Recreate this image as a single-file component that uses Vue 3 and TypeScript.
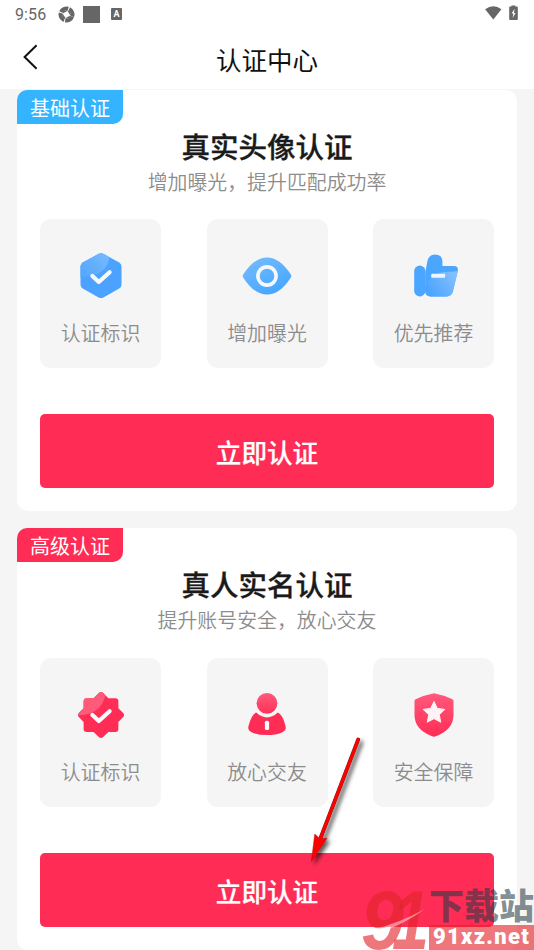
<script setup lang="ts">
interface Feature {
  icon: 'hexagon' | 'eye' | 'thumb' | 'badge' | 'person' | 'shield'
  label: string
}

interface Plan {
  tag: string
  tone: 'basic' | 'advanced'
  title: string
  desc: string
  features: Feature[]
}

const plans: Plan[] = [
  {
    tag: '基础认证',
    tone: 'basic',
    title: '真实头像认证',
    desc: '增加曝光，提升匹配成功率',
    features: [
      { icon: 'hexagon', label: '认证标识' },
      { icon: 'eye', label: '增加曝光' },
      { icon: 'thumb', label: '优先推荐' },
    ],
  },
  {
    tag: '高级认证',
    tone: 'advanced',
    title: '真人实名认证',
    desc: '提升账号安全，放心交友',
    features: [
      { icon: 'badge', label: '认证标识' },
      { icon: 'person', label: '放心交友' },
      { icon: 'shield', label: '安全保障' },
    ],
  },
]
</script>

<template>
  <div class="screen">
    <header class="top">
      <div class="status">
        <span class="clock">9:56</span>
        <svg class="s-swirl" viewBox="0 0 16 16">
          <circle cx="8" cy="8" r="5.700" fill="none" stroke="#666" stroke-width="3.600" stroke-dasharray="7.900 1.050" transform="rotate(20 8 8)" />
          <path d="M4 5.500 9.500 3.200 6 7.500ZM10.500 4l2.300 5.500L8.500 6ZM12 10.500l-5.500 2.300L10 8.500ZM5.500 12 3.200 6.500 7.500 10Z" fill="#666" />
          <circle cx="8" cy="8" r="2.600" fill="#fff" />
        </svg>
        <span class="s-square"></span>
        <span class="s-letter">A</span>
        <span class="spacer"></span>
        <svg class="s-wifi" viewBox="0 0 18 15"><path d="M0 3.600Q9-3 17.500 3.600L8.800 14.500Z" fill="#666" /></svg>
        <svg class="s-battery" viewBox="0 0 9 16">
          <path d="M2.400 1.500V.5h4v1H8q.8 0 .8.8v12q0 .8-.8.8H1q-.8 0-.8-.8v-12q0-.8.8-.8Z" fill="#666" />
          <path d="M5.600 3.800 2.600 8.600h1.800L3.600 13l3-5H5Z" fill="#fff" />
        </svg>
      </div>
      <nav class="nav">
        <svg class="back" viewBox="0 0 16 26"><path d="M14.600 1.200 2.600 13l12 11.800" fill="none" stroke="#111" stroke-width="2" /></svg>
        <h1>认证中心</h1>
      </nav>
    </header>

    <main class="list">
      <section v-for="plan in plans" :key="plan.tag" class="card">
        <span class="tag" :class="plan.tone">{{ plan.tag }}</span>
        <h2>{{ plan.title }}</h2>
        <p class="desc">{{ plan.desc }}</p>
        <div class="features">
          <div v-for="f in plan.features" :key="f.label" class="feature">
            <svg class="icon" viewBox="0 0 50 50">
              <template v-if="f.icon === 'hexagon'">
                <defs>
                  <linearGradient id="hexShine" x1="0" y1="1" x2="1" y2=".2"><stop offset="0" stop-color="#4fa4ff" /><stop offset="1" stop-color="#74b9ff" /></linearGradient>
                  <clipPath id="hexClip"><path d="M22.600 2.800q2.400-1.300 4.800 0l15.800 8.800q2.300 1.400 2.300 4v18q0 2.600-2.300 4l-15.800 8.800q-2.400 1.300-4.800 0L6.800 37.600q-2.300-1.400-2.300-4v-18q0-2.600 2.300-4Z" /></clipPath>
                </defs>
                <g clip-path="url(#hexClip)">
                  <rect width="50" height="50" fill="#4ba2ff" />
                  <path d="M0 0h32Q36 12 25 21 16 27 0 26Z" fill="url(#hexShine)" />
                </g>
                <path d="m16.400 25 6.400 6 10.800-9.800" class="tick" />
              </template>
              <template v-else-if="f.icon === 'eye'">
                <defs><linearGradient id="eyeFill" x1="0" y1="0" x2=".6" y2="1"><stop offset="0" stop-color="#79bdff" /><stop offset="1" stop-color="#46a7ff" /></linearGradient></defs>
                <path d="M1.200 23.600Q12 6.500 25 6.500t23.800 17.100q1 1.400 0 2.800Q38 43.500 25 43.500T1.200 26.400q-1-1.400 0-2.800Z" fill="url(#eyeFill)" />
                <circle cx="25" cy="25" r="9.100" fill="none" stroke="#f5f7fa" stroke-width="3.600" />
              </template>
              <template v-else-if="f.icon === 'thumb'">
                <defs><linearGradient id="thumbFill" x1=".1" y1=".8" x2="1" y2=".3"><stop offset="0" stop-color="#4ba4ff" /><stop offset="1" stop-color="#83c0ff" /></linearGradient></defs>
                <rect x="5.200" y="14.500" width="11.200" height="31" rx="5.600" fill="#4aa6ff" />
                <path d="M16.200 21.500 18.700 9Q20.300 3.400 26 3.400q7.400 0 7.400 7.400v4.200h11.400q4.800 0 4 5l-5 20.600q-1.200 4.800-6 4.800H21.700q-5.500 0-5.500-5.400Z" fill="#4aa6ff" />
                <path d="M48.800 20 44 40.600q-1.400 4.800-6.200 4.800H21.700q-5.500 0-5.500-5.400V35Q22 23 34 21q7-.2 14.800-1Z" fill="url(#thumbFill)" />
                <rect x="22.200" y="22.800" width="14" height="4" rx="1" fill="#edf6ff" />
              </template>
              <template v-else-if="f.icon === 'badge'">
                <defs>
                  <clipPath id="badgeClip"><path d="M22.800 3q2.200-1.800 4.400 0l5.200 5.200h7q3 0 3 3v7l4.800 4.700q1.800 2.100 0 4.200l-4.800 4.800v7.200q0 3-3 3h-7L27.200 47q-2.200 1.800-4.400 0l-5.200-4.900h-7q-3 0-3-3v-7.200l-4.800-4.800q-1.800-2.100 0-4.200l4.800-4.700v-7q0-3 3-3h7Z" /></clipPath>
                </defs>
                <g clip-path="url(#badgeClip)">
                  <rect width="50" height="50" fill="#ff2d55" />
                  <path d="M0 0h30Q29 15 19 21 11 26 0 25Z" fill="#ff5a7a" />
                </g>
                <path d="m16.400 25 6.400 6 10.800-9.800" class="tick" />
              </template>
              <template v-else-if="f.icon === 'person'">
                <defs><linearGradient id="headFill" x1="0" y1="0" x2="0" y2="1"><stop offset="0" stop-color="#ff5a7c" /><stop offset="1" stop-color="#ff3158" /></linearGradient></defs>
                <circle cx="25" cy="13.300" r="10.400" fill="url(#headFill)" />
                <path d="M14.300 22.600Q19 27.400 25 27.400t10.700-4.800Q40.500 24.300 43.500 36q1.200 4.700-3.600 6.400Q34 45 25 45T10.100 42.400Q5.300 40.700 6.500 36 9.500 24.300 14.300 22.600Z" fill="#ff2d55" />
                <rect x="22.900" y="30.700" width="4.200" height="9.400" rx="1.600" fill="#fff" />
              </template>
              <template v-else>
                <defs><linearGradient id="shieldFill" x1="0" y1="0" x2="0" y2="1"><stop offset="0" stop-color="#ff5a7c" /><stop offset="1" stop-color="#ff2d55" /></linearGradient></defs>
                <path d="M24 3.500q1-.3 2 0 9 1.700 17.400 5.700 1.100.5 1.100 1.700V25q0 14.400-17.500 21.300-2 .8-4 0Q5.500 39.400 5.500 25V10.900q0-1.200 1.100-1.700Q15 5.200 24 3.500Z" fill="url(#shieldFill)" />
                <path d="m25 11.500 3.300 6.900 7.500 1-5.500 5.300 1.400 7.500-6.700-3.600-6.700 3.600 1.400-7.500-5.500-5.300 7.500-1Z" fill="#fdf3f5" stroke="#fdf3f5" stroke-width="1" stroke-linejoin="round" />
              </template>
            </svg>
            <span class="label">{{ f.label }}</span>
          </div>
        </div>
        <button class="action" type="button">立即认证</button>
      </section>
    </main>

    <svg class="arrow" viewBox="0 0 70 140">
      <defs><filter id="arrowShadow" x="-30%" y="-10%" width="180%" height="130%"><feDropShadow dx="3" dy="3" stdDeviation="2" flood-color="#000" flood-opacity=".65" /></filter></defs>
      <g filter="url(#arrowShadow)">
        <path d="M58.200 9.500 19.800 110" stroke="#7d1515" stroke-width="3.800" stroke-linecap="round" />
        <path d="m11.400 131.500 3.400-27.500 4.600 4.600 7.600-.4Z" fill="#f00" stroke="#b01010" stroke-width=".5" />
        <path d="M58.200 9.500 19.400 111" stroke="#f00" stroke-width="3" stroke-linecap="round" />
      </g>
    </svg>

    <div class="watermark">
      <svg class="wm-logo" viewBox="0 0 70 64">
        <text x="2" y="63" textLength="43" lengthAdjust="spacingAndGlyphs">9</text>
        <text x="33" y="63" textLength="37" lengthAdjust="spacingAndGlyphs">1</text>
        <path d="M16 43Q40 37 66 23 42 40 22 46Z" fill="#fff" fill-opacity=".45" />
      </svg>
      <div class="wm-side">
        <span class="wm-name">下载站</span>
        <span class="wm-url">91xz.net</span>
      </div>
    </div>
  </div>
</template>

<style>
body {
  margin: 0;
  background: #f5f5f5;
}
</style>

<style scoped>
.screen {
  position: relative;
  box-sizing: border-box;
  width: 534px;
  height: 950px;
  overflow: hidden;
  background: #f5f5f5;
  font-family: Roboto, "Noto Sans CJK SC", sans-serif;
}
.top {
  height: 89px;
  background: #fff;
}
.status {
  display: flex;
  align-items: center;
  height: 28px;
  padding: 0 15px;
  color: #666;
}
.clock {
  width: 43px;
  font-size: 16px;
  letter-spacing: 0.1px;
}
.s-swirl {
  width: 17px;
  height: 17px;
}
.s-square {
  width: 17px;
  height: 17px;
  margin-left: 8px;
  background: #666;
}
.s-letter {
  width: 11px;
  height: 12px;
  margin-left: 11px;
  border-radius: 1px;
  background: #666;
  color: #fff;
  font-size: 9px;
  font-weight: 700;
  line-height: 12px;
  text-align: center;
}
.spacer {
  flex: 1;
}
.s-wifi {
  width: 17px;
  height: 14px;
  margin: 0 7px 2px 0;
}
.s-battery {
  width: 9px;
  height: 16px;
  margin: 0 1px 2px 0;
}
.nav {
  display: grid;
  grid-template-columns: 60px 1fr 60px;
  align-items: center;
  height: 59px;
}
.back {
  width: 16px;
  height: 26px;
  margin: 0 0 5px 22px;
}
h1 {
  margin: 0;
  padding-top: 3px;
  color: #111;
  font-size: 25.500px;
  font-weight: 400;
  line-height: 60px;
  text-align: center;
}
.list {
  display: flex;
  flex-direction: column;
  gap: 17px;
  padding: 0.500px 17px 0;
}
.card {
  display: flex;
  flex-direction: column;
  box-sizing: border-box;
  height: 421.700px;
  padding: 0 23px;
  border-radius: 11px;
  background: #fff;
}
.tag {
  width: 106px;
  height: 34px;
  margin-left: -23px;
  border-radius: 10px 0 10px 0;
  color: #fff;
  font-size: 20px;
  line-height: 38px;
  text-align: center;
}
.basic {
  background: #34b4ff;
}
.advanced {
  background: #ff2d55;
}
h2 {
  margin: 0;
  padding-top: 3px;
  color: #1a1a1a;
  font-size: 28.500px;
  font-weight: 500;
  line-height: 44px;
  text-align: center;
  -webkit-text-stroke: 0.300px #1a1a1a;
}
.desc {
  margin: 0;
  color: #8c8c8c;
  font-size: 19.900px;
  font-weight: 350;
  line-height: 26px;
  text-align: center;
}
.features {
  display: flex;
  justify-content: space-between;
  margin-top: 22.800px;
}
.feature {
  display: flex;
  flex-direction: column;
  align-items: center;
  box-sizing: border-box;
  width: 121px;
  height: 149px;
  padding-top: 32px;
  border-radius: 11px;
  background: #f5f5f5;
}
.icon {
  width: 50px;
  height: 50px;
}
.tick {
  fill: none;
  stroke: #f8f9fb;
  stroke-width: 4.200;
  stroke-linecap: round;
  stroke-linejoin: round;
}
.label {
  margin-top: 19px;
  color: #8c8c8c;
  font-size: 19.900px;
  font-weight: 350;
  line-height: 30px;
}
.action {
  height: 74px;
  margin-top: 45.700px;
  padding: 1px 0 0;
  border: 0;
  border-radius: 5px;
  background: #ff2d55;
  color: #fff;
  font-family: inherit;
  font-size: 25.600px;
  font-weight: 500;
  -webkit-text-stroke: 0.200px #fff;
}
.arrow {
  position: absolute;
  left: 300px;
  top: 730px;
  width: 70px;
  height: 140px;
}
.watermark {
  position: absolute;
  right: 0;
  bottom: 0;
  display: flex;
  align-items: flex-end;
}
.wm-logo {
  width: 70px;
  height: 64px;
}
.wm-logo text {
  fill: #e2242a;
  fill-opacity: 0.62;
  font-family: "Liberation Sans", sans-serif;
  font-size: 83px;
  font-style: italic;
  font-weight: 700;
}
.wm-side {
  display: flex;
  flex-direction: column;
  width: 105px;
}
.wm-name {
  color: rgba(37, 57, 70, 0.59);
  font-size: 35px;
  font-weight: 900;
  line-height: 35px;
  white-space: nowrap;
}
.wm-url {
  height: 25px;
  padding-left: 4px;
  background: rgba(226, 36, 42, 0.62);
  color: #fff;
  font-family: Roboto, sans-serif;
  font-size: 22px;
  font-weight: 900;
  line-height: 24px;
  letter-spacing: 1.300px;
  white-space: nowrap;
}
</style>
